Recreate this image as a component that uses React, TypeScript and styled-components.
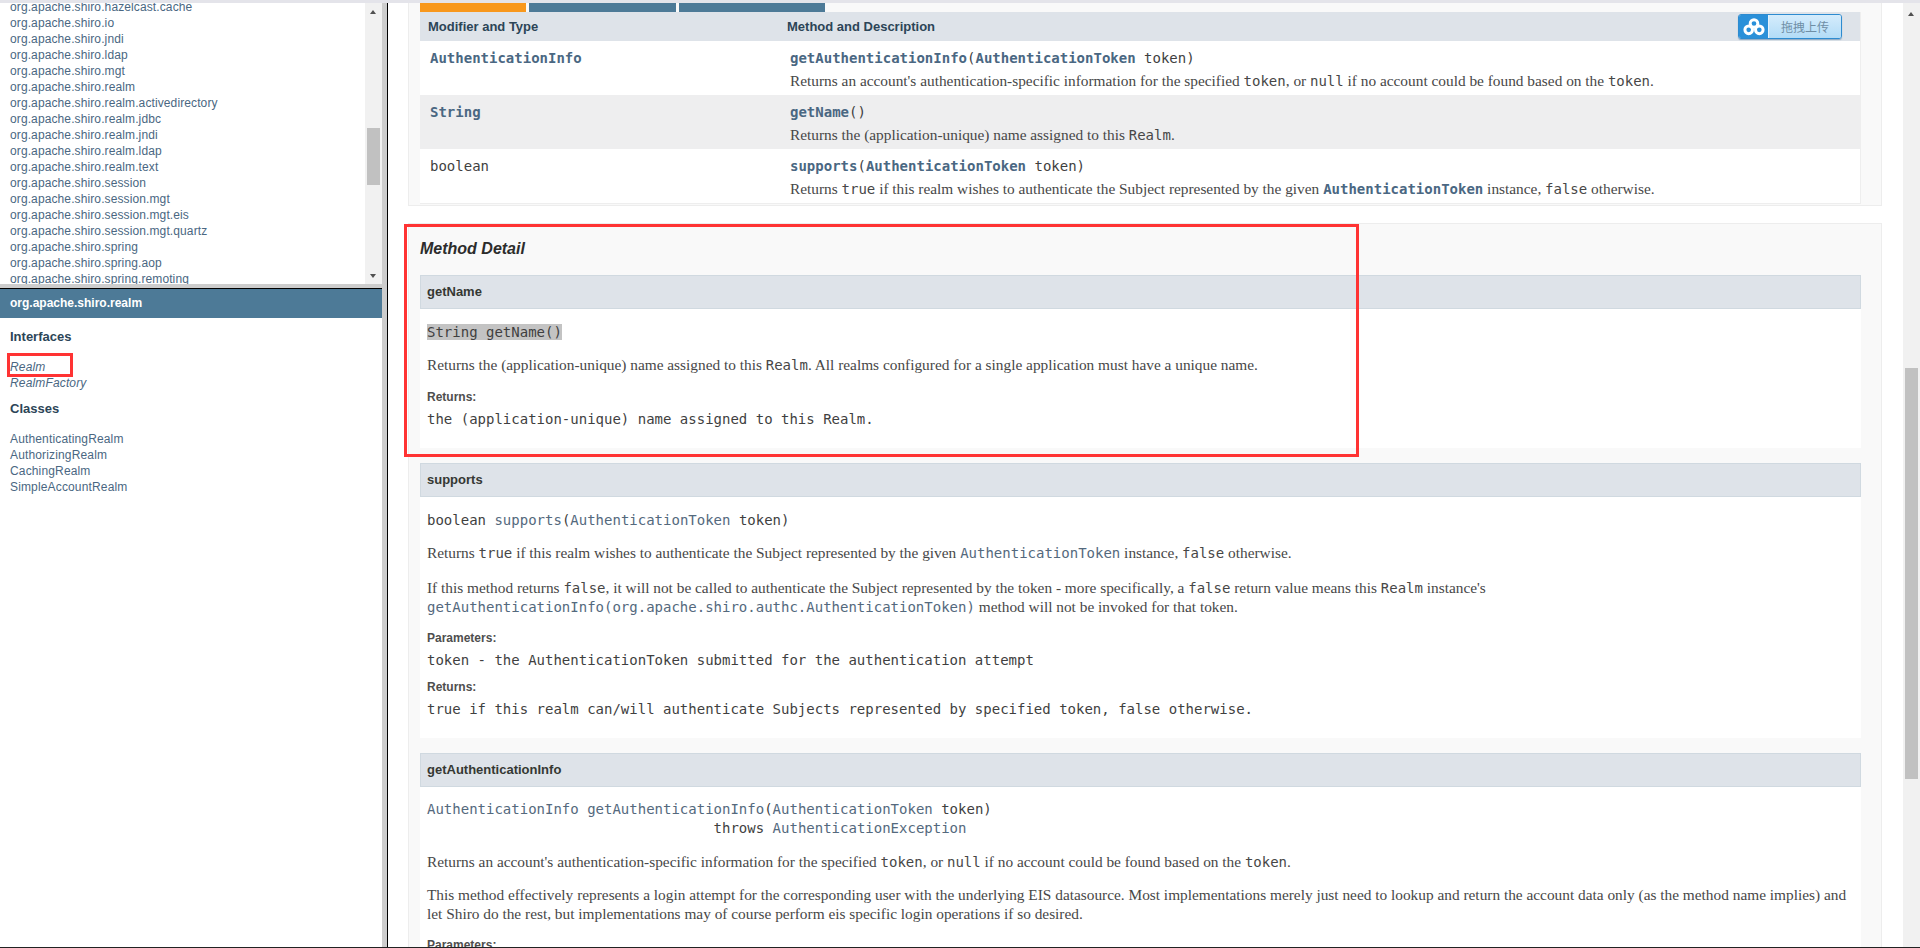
import React from "react";
import styled, { createGlobalStyle } from "styled-components";

const Global = createGlobalStyle`
  html, body { margin: 0; padding: 0; background: #fff; overflow: hidden; }
  * { box-sizing: border-box; }
`;
const SANS = `"Liberation Sans", Arial, sans-serif`;
const SERIF = `"Liberation Serif", "Times New Roman", serif`;
const MONO = `"DejaVu Sans Mono", monospace`;

const Page = styled.div`
  width: 1920px; height: 948px; display: flex; flex-direction: column; overflow: hidden; position: relative;
  border-bottom: 1px solid #222; background: #fff;
`;
const TopBar = styled.div`height: 3px; flex: none; background: #e4e4ea;`;
const Frames = styled.div`flex: 1; min-height: 0; display: grid; grid-template-columns: 382px 5px 1px 1fr;`;
const LeftCol = styled.div`display: flex; flex-direction: column; min-height: 0; position: relative;`;
const VDivider = styled.div`background: #cdcdcd;`;
const VLine = styled.div`background: #000;`;
const PackageFrame = styled.div`height: 281px; flex: none; display: flex; overflow: hidden; background: #fff;`;
const PackageList = styled.ul`
  flex: 1; margin: -4px 0 0; padding: 0 0 0 10px; list-style: none; font: 12px/16px ${SANS}; color: #4a6782; letter-spacing: .11px;
`;
const PackageItem = styled.li`white-space: nowrap;`;
const Scrollbar = styled.div`
  flex: none; width: 17px; background: #f1f1f1; display: flex; flex-direction: column; align-items: center; position: relative;
`;
const Arrow = styled.div<{ $down?: boolean; $bottom: number }>`
  position: absolute; left: 5px; width: 0; height: 0;
  border-left: 3.5px solid transparent; border-right: 3.5px solid transparent;
  ${p => p.$down ? "border-top: 4px solid #505050;" : "border-bottom: 4px solid #505050;"}
  ${p => p.$down ? `bottom: ${p.$bottom}px;` : `top: ${p.$bottom}px;`}
`;
const Thumb = styled.div<{ $top: number; $height: number }>`
  position: absolute; left: 2px; width: 13px; top: ${p => p.$top}px; height: ${p => p.$height}px; background: #c1c1c1;
`;
const HDivider = styled.div`height: 5px; flex: none; background: #cdcdcd; border-bottom: 1px solid #000;`;
const ClassFrame = styled.div`flex: 1; background: #fff; font-family: ${SANS};`;
const ClassTitle = styled.div`
  height: 29px; background: #4d7a97; color: #fff; font: bold 12px/29px ${SANS}; padding-left: 10px;
`;
const ClassHeading = styled.h2<{ $top: number }>`
  margin: ${p => p.$top}px 0 0; padding-left: 10px; font: bold 13px/16px ${SANS}; color: #2c4557;
`;
const ClassList = styled.ul<{ $top: number; $italic?: boolean }>`
  margin: ${p => p.$top}px 0 0; padding: 0 0 0 10px; list-style: none; letter-spacing: .15px;
  font: ${p => p.$italic ? "italic " : ""}12px/16px ${SANS}; color: #4a6782;
`;
const RedBox = styled.div<{ $l: number; $t: number; $w: number; $h: number }>`
  position: absolute; left: ${p => p.$l}px; top: ${p => p.$t}px; width: ${p => p.$w}px; height: ${p => p.$h}px;
  border: 3px solid #ff3333; pointer-events: none;
`;
const MainFrame = styled.div`display: flex; min-height: 0; position: relative; overflow: hidden;`;
const Content = styled.main`flex: 1; min-width: 0; padding: 0 21px 0 20px; overflow: hidden;`;
const SummaryBox = styled.section`
  height: 203px; background: #f9f9f9; border: 1px solid #ededed; border-top: 0; padding: 0 20px 0 11px;
  display: flex; flex-direction: column;
`;
const Tabs = styled.div`height: 9px; flex: none; display: flex; gap: 3px;`;
const Tab = styled.div<{ $w: number; $active?: boolean }>`
  width: ${p => p.$w}px; background: ${p => p.$active ? "#f8981d" : "#4d7a97"};
`;
const MethodTable = styled.div`
  display: flex; flex-direction: column; background: #fff; border: 1px solid #eee; border-top: 0; border-left: 0;
`;
const HeadRow = styled.div`
  height: 29px; flex: none; background: #dee3e9; display: grid; grid-template-columns: 359px 1fr;
  font: bold 13px/30px ${SANS}; color: #2c4557;
`;
const HeadCell = styled.div`padding-left: 8px;`;
const RowWrap = styled.div<{ $alt?: boolean }>`
  height: 54px; flex: none; display: grid; grid-template-columns: 359px 1fr; background: ${p => p.$alt ? "#eeeeef" : "#fff"};
`;
const TypeCell = styled.div<{ $bold?: boolean }>`
  padding: 7px 0 0 10px; font: ${p => p.$bold ? "bold " : ""}14px/20px ${MONO}; color: ${p => p.$bold ? "#4a6782" : "#3f3f3f"};
`;
const MethodCell = styled.div`padding: 7px 0 0 11px;`;
const Sig = styled.div`font: 14px/20px ${MONO}; color: #3f3f3f; white-space: pre;`;
const Serif = styled.div<{ $top?: number }>`
  margin-top: ${p => p.$top ?? 0}px; font: 15.35px/19px ${SERIF}; color: #474747; white-space: nowrap;
`;
const Link = styled.span<{ $bold?: boolean }>`
  color: ${p => p.$bold ? "#4a6782" : "#54697d"}; font-family: ${MONO}; font-size: 14px; font-weight: ${p => p.$bold ? "bold" : "normal"};
`;
const Code = styled.span`font-family: ${MONO}; font-size: 14px; color: #474747;`;
const DetailBox = styled.section`
  margin-top: 17px; height: 760px; background: #f9f9f9; border: 1px solid #ededed; padding: 0 20px 0 11px;
`;
const DetailTitle = styled.h3`
  margin: 0; height: 51px; padding-top: 15px; font: italic bold 16px/20px ${SANS}; color: #2c2c2c;
`;
const MemberHead = styled.h4<{ $top?: number }>`
  margin: ${p => p.$top ?? 0}px 0 0; height: 34px; padding-left: 6px; background: #dee3e9; border: 1px solid #d0d9e0;
  font: bold 13px/31px ${SANS}; color: #353833;
`;
const MemberBody = styled.div`background: #fff; padding: 13px 7px 19px;`;
const Signature = styled.pre`margin: 0; font: 14px/20px ${MONO}; color: #3f3f3f;`;
const SigLong = styled(Signature)`line-height: 19px;`;
const Highlight = styled.span`background: #c3c3c3; display: inline-block; line-height: 16px; padding: 0;`;
const Label = styled.div<{ $top: number }>`
  margin-top: ${p => p.$top}px; font: bold 12px/16px ${SANS}; color: #4e4e4e;
`;
const Value = styled.div`margin-top: 4px; font: 14px/20px ${MONO}; color: #3f3f3f; white-space: pre;`;
const Para = styled(Serif)``;
const MainScrollbar = styled(Scrollbar)`height: 100%;`;

const Upload = styled.div`
  position: absolute; left: 1350px; top: 11px; width: 104px; height: 25px; display: flex; border: 1px solid #2d8bd0; border-radius: 3px;
  box-shadow: 0 1px 1px rgba(40,100,150,.45); overflow: hidden;
`;
const UploadIcon = styled.div`width: 29px; flex: none; background: #2a90d9; display: flex; align-items: center; justify-content: center;`;
const UploadText = styled.div`
  flex: 1; background: linear-gradient(#d5ecfc, #b2dcf7); border-left: 1px solid #e3f2fd; text-align: center;
  font: 12px/23px "Noto Sans CJK SC", sans-serif; color: #6f8ea5;
`;

const packages = ["hazelcast.cache","io","jndi","ldap","mgt","realm","realm.activedirectory","realm.jdbc","realm.jndi","realm.ldap","realm.text","session","session.mgt","session.mgt.eis","session.mgt.quartz","spring","spring.aop","spring.remoting"];

export default function App() {
  return (
    <Page>
      <Global />
      <TopBar />
      <Frames>
        <LeftCol>
          <PackageFrame>
            <PackageList>
              {packages.map(p => <PackageItem key={p}>org.apache.shiro.{p}</PackageItem>)}
            </PackageList>
            <Scrollbar>
              <Arrow $bottom={7} />
              <Thumb $top={125} $height={57} />
              <Arrow $down $bottom={6} />
            </Scrollbar>
          </PackageFrame>
          <HDivider />
          <ClassFrame>
            <ClassTitle>org.apache.shiro.realm</ClassTitle>
            <ClassHeading $top={11}>Interfaces</ClassHeading>
            <ClassList $top={14} $italic>
              <li>Realm</li>
              <li>RealmFactory</li>
            </ClassList>
            <ClassHeading $top={10}>Classes</ClassHeading>
            <ClassList $top={14}>
              <li>AuthenticatingRealm</li>
              <li>AuthorizingRealm</li>
              <li>CachingRealm</li>
              <li>SimpleAccountRealm</li>
            </ClassList>
          </ClassFrame>
          <RedBox $l={7} $t={350} $w={66} $h={24} />
        </LeftCol>
        <VDivider />
        <VLine />
        <MainFrame>
          <Content>
            <SummaryBox>
              <Tabs>
                <Tab $w={106} $active />
                <Tab $w={147} />
                <Tab $w={146} />
              </Tabs>
              <MethodTable>
                <HeadRow>
                  <HeadCell>Modifier and Type</HeadCell>
                  <HeadCell>Method and Description</HeadCell>
                </HeadRow>
                <RowWrap>
                  <TypeCell $bold>AuthenticationInfo</TypeCell>
                  <MethodCell>
                    <Sig><Link $bold>getAuthenticationInfo</Link>(<Link $bold>AuthenticationToken</Link> token)</Sig>
                    <Serif $top={3}>Returns an account's authentication-specific information for the specified <Code>token</Code>, or <Code>null</Code> if no account could be found based on the <Code>token</Code>.</Serif>
                  </MethodCell>
                </RowWrap>
                <RowWrap $alt>
                  <TypeCell $bold>String</TypeCell>
                  <MethodCell>
                    <Sig><Link $bold>getName</Link>()</Sig>
                    <Serif $top={3}>Returns the (application-unique) name assigned to this <Code>Realm</Code>.</Serif>
                  </MethodCell>
                </RowWrap>
                <RowWrap>
                  <TypeCell>boolean</TypeCell>
                  <MethodCell>
                    <Sig><Link $bold>supports</Link>(<Link $bold>AuthenticationToken</Link> token)</Sig>
                    <Serif $top={3}>Returns <Code>true</Code> if this realm wishes to authenticate the Subject represented by the given <Link $bold>AuthenticationToken</Link> instance, <Code>false</Code> otherwise.</Serif>
                  </MethodCell>
                </RowWrap>
              </MethodTable>
            </SummaryBox>
            <DetailBox>
              <DetailTitle>Method Detail</DetailTitle>
              <MemberHead>getName</MemberHead>
              <MemberBody>
                <Signature><Highlight>String getName()</Highlight></Signature>
                <Para $top={13}>Returns the (application-unique) name assigned to this <Code>Realm</Code>. All realms configured for a single application must have a unique name.</Para>
                <Label $top={14}>Returns:</Label>
                <Value>the (application-unique) name assigned to this Realm.</Value>
              </MemberBody>
              <MemberHead $top={15}>supports</MemberHead>
              <MemberBody>
                <Signature>boolean <Link>supports</Link>(<Link>AuthenticationToken</Link> token)</Signature>
                <Para $top={13}>Returns <Code>true</Code> if this realm wishes to authenticate the Subject represented by the given <Link>AuthenticationToken</Link> instance, <Code>false</Code> otherwise.</Para>
                <Para $top={15}>If this method returns <Code>false</Code>, it will not be called to authenticate the Subject represented by the token - more specifically, a <Code>false</Code> return value means this <Code>Realm</Code> instance's</Para>
                <Para $top={-1}><Link>getAuthenticationInfo(org.apache.shiro.authc.AuthenticationToken)</Link> method will not be invoked for that token.</Para>
                <Label $top={13}>Parameters:</Label>
                <Value>token - the AuthenticationToken submitted for the authentication attempt</Value>
                <Label $top={9}>Returns:</Label>
                <Value>true if this realm can/will authenticate Subjects represented by specified token, false otherwise.</Value>
              </MemberBody>
              <MemberHead $top={15}>getAuthenticationInfo</MemberHead>
              <MemberBody>
                <SigLong><Link>AuthenticationInfo</Link> <Link>getAuthenticationInfo</Link>(<Link>AuthenticationToken</Link> token){"\n"}{"                                  "}throws <Link>AuthenticationException</Link></SigLong>
                <Para $top={14}>Returns an account's authentication-specific information for the specified <Code>token</Code>, or <Code>null</Code> if no account could be found based on the <Code>token</Code>.</Para>
                <Para $top={13}>This method effectively represents a login attempt for the corresponding user with the underlying EIS datasource. Most implementations merely just need to lookup and return the account data only (as the method name implies) and</Para>
                <Para>let Shiro do the rest, but implementations may of course perform eis specific login operations if so desired.</Para>
                <Label $top={14}>Parameters:</Label>
              </MemberBody>
            </DetailBox>
          </Content>
          <MainScrollbar>
            <Arrow $bottom={9} />
            <Thumb $top={365} $height={411} />
          </MainScrollbar>
          <RedBox $l={16} $t={221} $w={955} $h={233} />
          <Upload>
            <UploadIcon>
              <svg width="22" height="18" viewBox="0 0 20 17" fill="none" stroke="#fff" strokeWidth="2.8">
                <circle cx="10" cy="5.2" r="3.6" />
                <circle cx="5" cy="11.2" r="3.6" />
                <circle cx="15" cy="11.2" r="3.6" />
              </svg>
            </UploadIcon>
            <UploadText>拖拽上传</UploadText>
          </Upload>
        </MainFrame>
      </Frames>
    </Page>
  );
}
